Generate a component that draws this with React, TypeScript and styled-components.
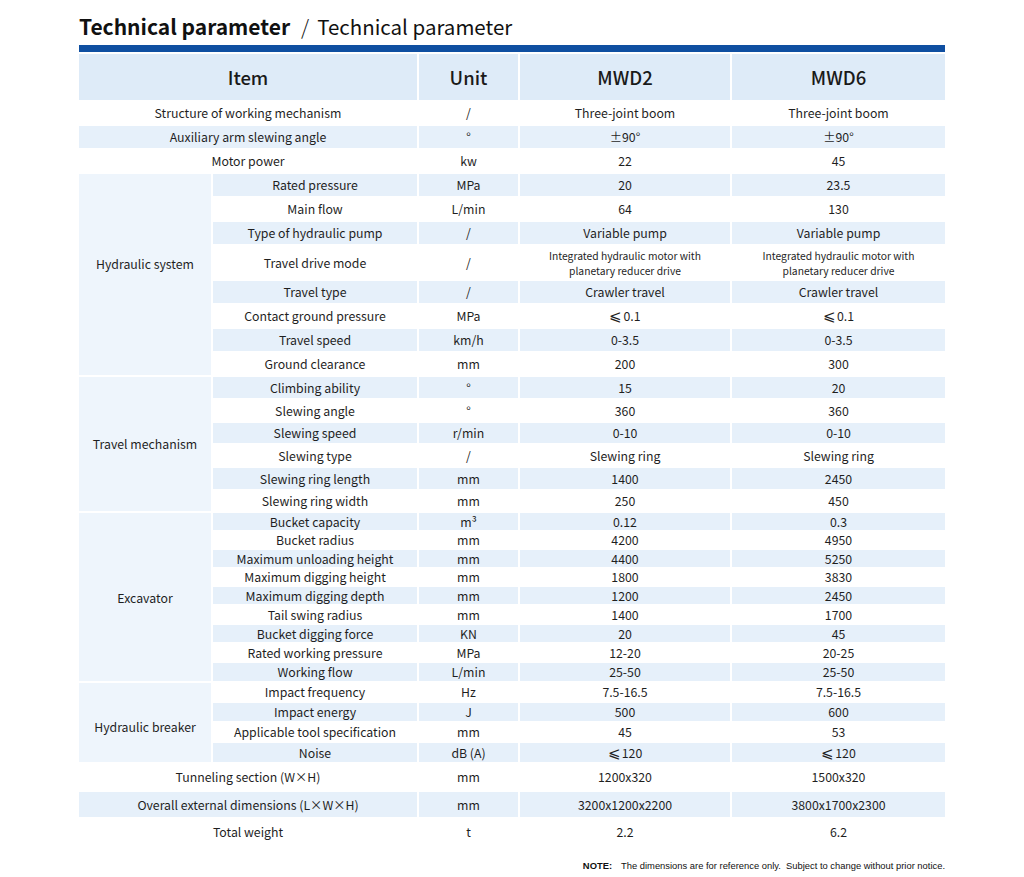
import React from "react";
import styled, { createGlobalStyle } from "styled-components";

const Global = createGlobalStyle`
  html, body { margin: 0; padding: 0; background: #ffffff; }
  body { font-family: "Noto Sans CJK SC", "Noto Sans", sans-serif; color: #1f1f1f; }
`;

const Page = styled.div`
  width: 866px;
  margin: 0 auto;
  padding-top: 11px;
`;

const Title = styled.h1`
  margin: 0;
  height: 31px;
  display: flex;
  align-items: center;
  font-size: 20.5px;
  line-height: 1;
  font-weight: 400;
  color: #111;
`;

const TitleStrong = styled.span`
  font-weight: 700;
  font-size: 21px;
`;

const Slash = styled.span`
  margin: 0 8px 0 11px;
  font-weight: 300;
`;

const Bar = styled.div`
  height: 7px;
  margin-top: 3px;
  background: #0f4fa1;
`;

const Table = styled.table`
  width: 870px;
  margin: 0 -2px;
  border-collapse: separate;
  border-spacing: 2px;
  table-layout: fixed;
  font-size: 12.3px;
`;

const Row = styled.tr<{ $h: number }>`
  height: ${(p) => p.$h}px;
`;

const HeadCell = styled.th`
  height: 46px;
  padding: 0;
  background: #deebf8;
  font-size: 18.5px;
  font-weight: 500;
  color: #1a1a1a;
  text-align: center;
  vertical-align: middle;
`;

const Cell = styled.td<{ $blue: boolean; $small?: boolean }>`
  padding: 0;
  text-align: center;
  vertical-align: middle;
  background: ${(p) => (p.$blue ? "#e6f0fa" : "#ffffff")};
  font-size: ${(p) => (p.$small ? "10.3px" : "12.3px")};
  line-height: ${(p) => (p.$small ? "15px" : "16px")};
  white-space: nowrap;
  color: #1f1f1f;
`;

const Sym = styled.span`
  font-size: 14.5px;
  line-height: 1;
  margin-right: 1px;
`;

const GroupCell = styled.td<{ $shift: number }>`
  padding: ${(p) => (p.$shift > 0 ? `${p.$shift}px 0 0` : `0 0 ${-p.$shift}px`)};
  text-align: center;
  vertical-align: middle;
  background: #eef5fc;
  font-size: 12.3px;
  color: #1f1f1f;
`;

const Note = styled.div`
  margin-top: 13px;
  text-align: right;
  font-family: "Liberation Sans", Arial, sans-serif;
  font-size: 9.4px;
  color: #111;
`;

const NoteLabel = styled.b`
  font-weight: 700;
  margin-right: 9px;
`;

type Item = { name: string; unit: string; a: React.ReactNode; b: React.ReactNode; h: number; small?: boolean };
type Group = { group?: string; shift?: number; rows: Item[] };

const drive = (
  <>
    Integrated hydraulic motor with
    <br />
    planetary reducer drive
  </>
);

const le = (v: string) => (
  <>
    <Sym>⩽</Sym>
    {v}
  </>
);

const data: Group[] = [
  { rows: [{ name: "Structure of working mechanism", unit: "/", a: "Three-joint boom", b: "Three-joint boom", h: 22 }] },
  { rows: [{ name: "Auxiliary arm slewing angle", unit: "°", a: "±90°", b: "±90°", h: 22 }] },
  { rows: [{ name: "Motor power", unit: "kw", a: "22", b: "45", h: 22 }] },
  {
    group: "Hydraulic system",
    shift: -22,
    rows: [
      { name: "Rated pressure", unit: "MPa", a: "20", b: "23.5", h: 22 },
      { name: "Main flow", unit: "L/min", a: "64", b: "130", h: 22 },
      { name: "Type of hydraulic pump", unit: "/", a: "Variable pump", b: "Variable pump", h: 22 },
      { name: "Travel drive mode", unit: "/", a: drive, b: drive, h: 33, small: true },
      { name: "Travel type", unit: "/", a: "Crawler travel", b: "Crawler travel", h: 22 },
      { name: "Contact ground pressure", unit: "MPa", a: le("0.1"), b: le("0.1"), h: 22 },
      { name: "Travel speed", unit: "km/h", a: "0-3.5", b: "0-3.5", h: 22 },
      { name: "Ground clearance", unit: "mm", a: "200", b: "300", h: 22 },
    ],
  },
  {
    group: "Travel mechanism",
    shift: 0,
    rows: [
      { name: "Climbing ability", unit: "°", a: "15", b: "20", h: 21 },
      { name: "Slewing angle", unit: "°", a: "360", b: "360", h: 21 },
      { name: "Slewing speed", unit: "r/min", a: "0-10", b: "0-10", h: 20 },
      { name: "Slewing type", unit: "/", a: "Slewing ring", b: "Slewing ring", h: 21 },
      { name: "Slewing ring length", unit: "mm", a: "1400", b: "2450", h: 21 },
      { name: "Slewing ring width", unit: "mm", a: "250", b: "450", h: 20 },
    ],
  },
  {
    group: "Excavator",
    shift: 2,
    rows: [
      { name: "Bucket capacity", unit: "m³", a: "0.12", b: "0.3", h: 17 },
      { name: "Bucket radius", unit: "mm", a: "4200", b: "4950", h: 16 },
      { name: "Maximum unloading height", unit: "mm", a: "4400", b: "5250", h: 17 },
      { name: "Maximum digging height", unit: "mm", a: "1800", b: "3830", h: 16 },
      { name: "Maximum digging depth", unit: "mm", a: "1200", b: "2450", h: 17 },
      { name: "Tail swing radius", unit: "mm", a: "1400", b: "1700", h: 17 },
      { name: "Bucket digging force", unit: "KN", a: "20", b: "45", h: 17 },
      { name: "Rated working pressure", unit: "MPa", a: "12-20", b: "20-25", h: 17 },
      { name: "Working flow", unit: "L/min", a: "25-50", b: "25-50", h: 18 },
    ],
  },
  {
    group: "Hydraulic breaker",
    shift: 8,
    rows: [
      { name: "Impact frequency", unit: "Hz", a: "7.5-16.5", b: "7.5-16.5", h: 18 },
      { name: "Impact energy", unit: "J", a: "500", b: "600", h: 18 },
      { name: "Applicable tool specification", unit: "mm", a: "45", b: "53", h: 18 },
      { name: "Noise", unit: "dB (A)", a: le("120"), b: le("120"), h: 19 },
    ],
  },
  { rows: [{ name: "Tunneling section (W×H)", unit: "mm", a: "1200x320", b: "1500x320", h: 26 }] },
  { rows: [{ name: "Overall external dimensions (L×W×H)", unit: "mm", a: "3200x1200x2200", b: "3800x1700x2300", h: 25 }] },
  { rows: [{ name: "Total weight", unit: "t", a: "2.2", b: "6.2", h: 26 }] },
];

export default function App() {
  let idx = 0;
  const body: React.ReactNode[] = [];
  data.forEach((g, gi) => {
    g.rows.forEach((r, ri) => {
      const blue = idx % 2 === 1;
      idx += 1;
      body.push(
        <Row key={`${gi}-${ri}`} $h={r.h}>
          {g.group && ri === 0 && (
            <GroupCell rowSpan={g.rows.length} $shift={g.shift ?? 0}>
              {g.group}
            </GroupCell>
          )}
          {g.group ? (
            <Cell $blue={blue}>{r.name}</Cell>
          ) : (
            <Cell $blue={blue} colSpan={2}>
              {r.name}
            </Cell>
          )}
          <Cell $blue={blue}>{r.unit}</Cell>
          <Cell $blue={blue} $small={r.small}>
            {r.a}
          </Cell>
          <Cell $blue={blue} $small={r.small}>
            {r.b}
          </Cell>
        </Row>
      );
    });
  });

  return (
    <>
      <Global />
      <Page>
        <Title>
          <TitleStrong>Technical parameter</TitleStrong>
          <Slash>/</Slash>
          <span>Technical parameter</span>
        </Title>
        <Bar />
        <Table>
          <colgroup>
            <col style={{ width: 132 }} />
            <col style={{ width: 204 }} />
            <col style={{ width: 99 }} />
            <col style={{ width: 210 }} />
            <col style={{ width: 213 }} />
          </colgroup>
          <thead>
            <tr>
              <HeadCell colSpan={2}>Item</HeadCell>
              <HeadCell>Unit</HeadCell>
              <HeadCell>MWD2</HeadCell>
              <HeadCell>MWD6</HeadCell>
            </tr>
          </thead>
          <tbody>{body}</tbody>
        </Table>
        <Note>
          <NoteLabel>NOTE:</NoteLabel>The dimensions are for reference only.&nbsp; Subject to change without prior notice.
        </Note>
      </Page>
    </>
  );
}
